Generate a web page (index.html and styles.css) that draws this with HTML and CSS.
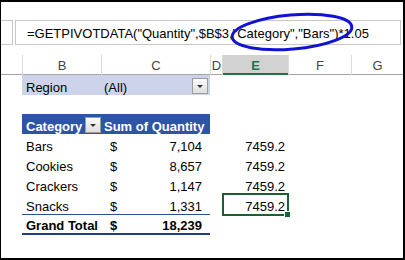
FILE: index.html
```html
<!DOCTYPE html>
<html lang="en">
	<head>
		<meta charset="UTF-8" />
		<meta name="viewport" content="width=device-width, initial-scale=1.0" />
		<title>GETPIVOTDATA</title>
		<link rel="stylesheet" href="styles.css">
	</head>
	<body>
		<div class="frame">
			<!-- 名称框 + 编辑栏 -->
			<div class="formula-bar">
				<div class="name-box"></div>
				<div class="formula">=GETPIVOTDATA("Quantity",$B$3,"Category","Bars")*1.05</div>
			</div>

			<div class="sheet">
				<!-- 列标 -->
				<div class="row col-heads">
					<div></div>
					<div class="ch">B</div>
					<div class="ch">C</div>
					<div class="ch">D</div>
					<div class="ch sel">E</div>
					<div class="ch">F</div>
					<div class="ch">G</div>
				</div>

				<!-- 报表筛选 -->
				<div class="row filter">
					<div></div>
					<div class="cell">Region</div>
					<div class="cell val">(All)<span class="drop"></span></div>
				</div>

				<div class="row blank"></div>

				<!-- 数据透视表 -->
				<div class="row pv-head">
					<div></div>
					<div class="cell">Category<span class="drop"></span></div>
					<div class="cell val">Sum of Quantity</div>
				</div>
				<div class="row">
					<div></div>
					<div class="cell">Bars</div>
					<div class="cell amt"><span>$</span><span>7,104</span></div>
					<div></div>
					<div class="cell num">7459.2</div>
				</div>
				<div class="row">
					<div></div>
					<div class="cell">Cookies</div>
					<div class="cell amt"><span>$</span><span>8,657</span></div>
					<div></div>
					<div class="cell num">7459.2</div>
				</div>
				<div class="row">
					<div></div>
					<div class="cell">Crackers</div>
					<div class="cell amt"><span>$</span><span>1,147</span></div>
					<div></div>
					<div class="cell num">7459.2</div>
				</div>
				<div class="row">
					<div></div>
					<div class="cell">Snacks</div>
					<div class="cell amt"><span>$</span><span>1,331</span></div>
					<div></div>
					<div class="cell num active">7459.2<span class="handle"></span></div>
				</div>
				<div class="row total">
					<div></div>
					<div class="cell">Grand Total</div>
					<div class="cell amt"><span>$</span><span>18,239</span></div>
				</div>
			</div>

			<!-- 圈出 "Category","Bars" -->
			<svg class="callout" width="405" height="260" viewBox="0 0 405 260">
				<ellipse cx="292" cy="32" rx="60" ry="17" transform="rotate(-5 292 32)" fill="none" stroke="#1212d4" stroke-width="3" />
			</svg>
		</div>
	</body>
</html>
```

FILE: styles.css
```css
* {
	margin: 0;
	padding: 0;
	box-sizing: border-box;
}
body {
	background-color: #fff;
	font-family: "Liberation Sans", Arial, sans-serif;
	font-size: 13px;
	color: #000;
}
.frame {
	position: relative;
	width: 405px;
	height: 260px;
	border: 2px solid #000;
	border-left-width: 1px;
	overflow: hidden;
}

/* 编辑栏 */
.formula-bar {
	display: flex;
	gap: 2px;
	height: 25px;
	margin: 18px 2px 0 0;
}
.name-box {
	width: 12px;
	border: 1px solid #c6c6c6;
	border-left: none;
}
.formula {
	flex: 1;
	border: 1px solid #c6c6c6;
	padding: 2px 0 0 11px;
	line-height: 21px;
	white-space: nowrap;
}

/* 工作表 */
.sheet {
	margin-top: 10px;
}
.row {
	display: grid;
	grid-template-columns: 21px 79px 109px 12px 66px 63px 1fr;
	height: 20px;
}
.cell {
	display: flex;
	align-items: flex-end;
	line-height: 15px;
	padding-left: 4px;
	white-space: nowrap;
}
.col-heads {
	height: 20px;
	border-bottom: 1px solid #a5a5a5;
}
.ch {
	border-left: 1px solid #dadada;
	text-align: center;
	line-height: 19px;
	padding-top: 1px;
	color: #444;
}
.ch.sel {
	background-color: #d2d2d2;
	box-shadow: inset 0 -2px 0 #217346;
	color: #217346;
	font-weight: bold;
}
.blank {
	height: 19px;
}
.val {
	padding-left: 3px;
}

/* 下拉按钮 */
.drop {
	width: 16px;
	height: 16px;
	margin: 0 0 1px auto;
	border: 1px solid #9c9c9c;
	background: linear-gradient(#fbfbfb, #dedede);
	position: relative;
}
.drop::after {
	content: "";
	position: absolute;
	left: 4px;
	top: 6px;
	border-left: 3px solid transparent;
	border-right: 3px solid transparent;
	border-top: 3px solid #333;
}
.filter .cell {
	background-color: #cdd4ea;
}
.filter .drop {
	margin-right: 2px;
}
.pv-head .cell {
	background-color: #2e54a6;
	color: #fff;
	font-weight: bold;
}
.pv-head .drop {
	margin-right: 0;
}

/* 会计格式 */
.amt {
	justify-content: space-between;
	padding: 0 8px 0 9px;
}
.num {
	justify-content: flex-end;
	padding-right: 3px;
}
.total {
	height: 21px;
}
.total .cell {
	border-top: 1px solid #2f4f8f;
	border-bottom: 2px solid #203f80;
	font-weight: bold;
	line-height: 14px;
}

/* 活动单元格 */
.active {
	position: relative;
}
.active::before {
	content: "";
	position: absolute;
	left: 0;
	right: -1px;
	top: -1px;
	bottom: -2px;
	border: 2px solid #1d5e32;
}
.handle {
	position: absolute;
	right: -2px;
	bottom: -3px;
	width: 5px;
	height: 5px;
	background-color: #1d5e32;
	outline: 1px solid #fff;
}

.callout {
	position: absolute;
	left: -1px;
	top: -2px;
	pointer-events: none;
}
```
